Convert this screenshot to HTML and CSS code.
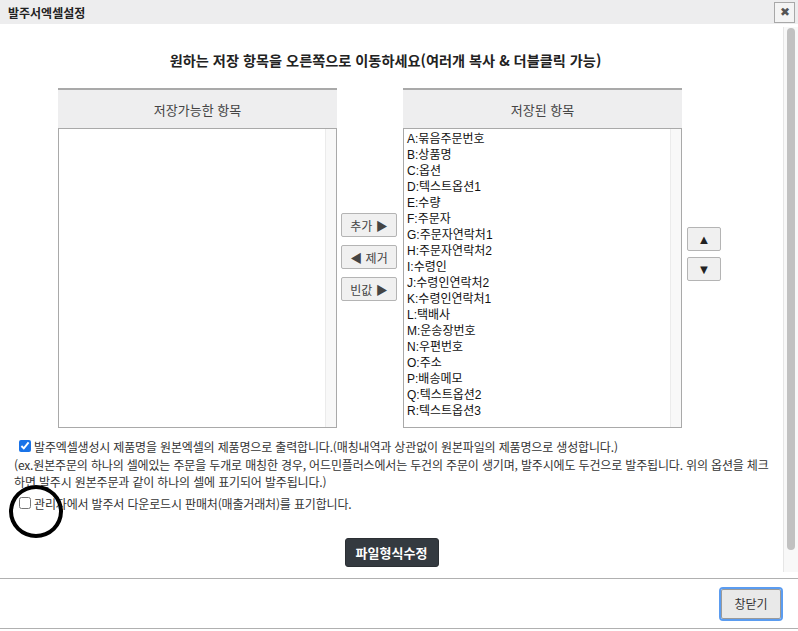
FILE: index.html
```html
<!DOCTYPE html>
<html lang="ko">

<head>
    <meta charset="UTF-8">
    <meta name="viewport" content="width=device-width, initial-scale=1.0">
    <title>발주서엑셀설정</title>
    <link rel="stylesheet" href="styles.css">
</head>

<body>
    <!-- Title Bar -->
    <div class="titlebar">
        <span class="title">발주서엑셀설정</span>
        <button class="close-btn">&#10006;</button>
    </div>

    <div class="dialog-body">
        <div class="content">
            <h2 class="guide">원하는 저장 항목을 오른쪽으로 이동하세요(여러개 복사 &amp; 더블클릭 가능)</h2>

            <div class="panels">
                <div class="panel">
                    <div class="panel-head">저장가능한 항목</div>
                    <div class="listbox">
                        <ul class="items"></ul>
                        <div class="list-scroll"></div>
                    </div>
                </div>

                <div class="move-buttons">
                    <button class="small-btn">추가 &#9654;</button>
                    <button class="small-btn">&#9664; 제거</button>
                    <button class="small-btn">빈값 &#9654;</button>
                </div>

                <div class="panel">
                    <div class="panel-head">저장된 항목</div>
                    <div class="listbox">
                        <ul class="items">
                            <li>A:묶음주문번호</li>
                            <li>B:상품명</li>
                            <li>C:옵션</li>
                            <li>D:텍스트옵션1</li>
                            <li>E:수량</li>
                            <li>F:주문자</li>
                            <li>G:주문자연락처1</li>
                            <li>H:주문자연락처2</li>
                            <li>I:수령인</li>
                            <li>J:수령인연락처2</li>
                            <li>K:수령인연락처1</li>
                            <li>L:택배사</li>
                            <li>M:운송장번호</li>
                            <li>N:우편번호</li>
                            <li>O:주소</li>
                            <li>P:배송메모</li>
                            <li>Q:텍스트옵션2</li>
                            <li>R:텍스트옵션3</li>
                        </ul>
                        <div class="list-scroll"></div>
                    </div>
                </div>

                <div class="order-buttons">
                    <button class="small-btn arrow-btn">&#9650;</button>
                    <button class="small-btn arrow-btn">&#9660;</button>
                </div>
            </div>

            <div class="options">
                <label class="check-row"><input type="checkbox" checked> 발주엑셀생성시 제품명을 원본엑셀의 제품명으로 출력합니다.(매칭내역과 상관없이 원본파일의 제품명으로 생성합니다.)</label>
                <p class="note">(ex.원본주문의 하나의 셀에있는 주문을 두개로 매칭한 경우, 어드민플러스에서는 두건의 주문이 생기며, 발주시에도 두건으로 발주됩니다. 위의 옵션을 체크<br>하면 발주시 원본주문과 같이 하나의 셀에 표기되어 발주됩니다.)</p>
                <label class="check-row second"><input type="checkbox"> 관리자에서 발주서 다운로드시 판매처(매출거래처)를 표기합니다.</label>
                <div class="mark-circle"></div>
            </div>

            <div class="save-row">
                <button class="dark-btn">파일형식수정</button>
            </div>
        </div>

        <!-- Page Scrollbar -->
        <div class="scrollbar">
            <div class="thumb"></div>
        </div>
    </div>

    <div class="footer">
        <button class="close-window">창닫기</button>
    </div>
</body>

</html>
```

FILE: styles.css
```css
body {
    font-family: 'Liberation Sans', 'Noto Sans CJK KR', sans-serif;
    margin: 0;
    padding: 0;
    background-color: #ffffff;
    color: #333;
    width: 798px;
    height: 631px;
    overflow: hidden;
}

button {
    font-family: 'Liberation Sans', 'Noto Sans CJK KR', sans-serif;
}

/* Title Bar */
.titlebar {
    height: 24px;
    background-color: #ededee;
    display: flex;
    align-items: center;
    justify-content: space-between;
    padding-left: 8px;
    padding-right: 3px;
}

.title {
    font-family: 'Noto Sans CJK KR', sans-serif;
    font-size: 12px;
    font-weight: bold;
    color: #222;
}

.close-btn {
    width: 21px;
    height: 21px;
    padding: 0;
    border: 1px solid #a8a8a8;
    background-color: #f4f4f4;
    color: #555;
    font-size: 12px;
    line-height: 19px;
}

/* Body */
.dialog-body {
    display: flex;
    height: 554px;
}

.content {
    flex: 1;
    position: relative;
}

.guide {
    font-family: 'Noto Sans CJK KR', sans-serif;
    margin: 0;
    padding: 26px 12px 0 0;
    height: 38px;
    text-align: center;
    font-size: 14.2px;
    line-height: 20px;
    font-weight: bold;
    color: #222;
}

.panels {
    display: flex;
    padding-left: 58px;
}

.panel {
    width: 279px;
}

.panel-head {
    height: 38px;
    border-top: 2px solid #a9a9a9;
    background-color: #eeeeef;
    text-align: center;
    line-height: 40px;
    font-family: 'Noto Sans CJK KR', sans-serif;
    font-size: 13px;
    color: #444;
}

.listbox {
    height: 298px;
    border: 1px solid #a9a9a9;
    display: flex;
    background-color: #fff;
}

.items {
    flex: 1;
    list-style: none;
    margin: 0;
    padding: 2px 3px;
    font-size: 12px;
    line-height: 16px;
    color: #111;
}

.list-scroll {
    width: 10px;
    background-color: #f8f8f8;
    border-left: 1px solid #ebebeb;
}

.move-buttons {
    display: flex;
    flex-direction: column;
    justify-content: center;
    gap: 8px;
    width: 56px;
    margin: 0 6px 0 4px;
    padding-bottom: 2px;
}

.order-buttons {
    display: flex;
    flex-direction: column;
    justify-content: center;
    gap: 6px;
    margin-left: 5px;
    padding-bottom: 8px;
}

.small-btn {
    height: 24px;
    padding: 0;
    background-color: #f0f0f0;
    border: 1px solid #b4b4b4;
    border-radius: 2px;
    font-size: 12px;
    color: #444;
}

.arrow-btn {
    width: 34px;
    font-size: 13px;
    color: #222;
}

/* Options */
.options {
    position: relative;
    padding: 8px 0 0 14px;
    font-family: 'Noto Sans CJK KR', sans-serif;
    font-size: 12px;
    letter-spacing: -0.16px;
    color: #333;
}

.check-row {
    display: flex;
    align-items: center;
    height: 20px;
    padding-left: 4px;
}

.check-row.second {
    margin-top: 3px;
}

.check-row input {
    width: 12px;
    height: 12px;
    margin: 0 3px 0 1px;
    accent-color: #1a73e8;
}

.note {
    margin: 0;
    line-height: 17px;
}

.mark-circle {
    position: absolute;
    left: 9px;
    top: 57px;
    width: 46px;
    height: 45px;
    border: 4px solid #000;
    border-radius: 50%;
}

.save-row {
    text-align: center;
    margin-top: 25px;
}

.dark-btn {
    width: 94px;
    height: 29px;
    background-color: #343a40;
    color: #fff;
    border: 1px solid #2b2f33;
    border-radius: 3px;
    font-family: 'Noto Sans CJK KR', sans-serif;
    font-size: 13px;
    font-weight: bold;
}

/* Scrollbar */
.scrollbar {
    width: 14px;
    margin-top: 3px;
    height: 545px;
    background-color: #f8f8f8;
    border-left: 1px solid #e6e6e6;
    display: flex;
    justify-content: center;
}

.thumb {
    width: 8px;
    height: 522px;
    margin-top: 1px;
    background-color: #c1c1c1;
    border-radius: 4px;
}

/* Footer */
.footer {
    height: 49px;
    border-top: 1px solid #b0b0b0;
    border-bottom: 1px solid #b0b0b0;
    display: flex;
    justify-content: flex-end;
    align-items: center;
    padding-right: 17px;
}

.close-window {
    width: 60px;
    height: 30px;
    background-color: #e9e9e9;
    border: 1px solid #9a9a9a;
    border-radius: 2px;
    outline: 2px solid #5b9cf0;
    outline-offset: 0;
    font-family: 'Noto Sans CJK KR', sans-serif;
    font-size: 12px;
    color: #333;
}
```
